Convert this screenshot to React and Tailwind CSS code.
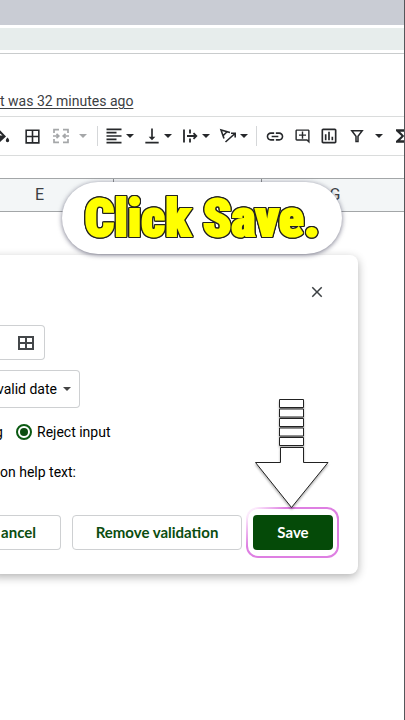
import React from 'react';
import {
  MdBorderAll,
  MdClose,
  MdFormatAlignLeft,
  MdFunctions,
  MdLink,
  MdOutlineAddComment,
  MdOutlineInsertChart,
  MdVerticalAlignBottom,
} from 'react-icons/md';

function ToolButton({ label, className = '', children }) {
  return (
    <button type="button" aria-label={label} className={`flex w-5 shrink-0 justify-center ${className}`}>
      {children}
    </button>
  );
}

function Caret({ label, className = '' }) {
  return (
    <button type="button" aria-label={label} className={`flex w-3 shrink-0 justify-center ${className}`}>
      <svg viewBox="0 0 8 4" className="h-1 w-2" fill="currentColor">
        <path d="M0 0h8L4 4z" />
      </svg>
    </button>
  );
}

function FillIcon() {
  return (
    <svg viewBox="0 0 20 20" className="size-5" fill="currentColor">
      <path d="M8 2l8 8.500-6.500 6L2 9.500l5-5L5.500 3l1-1L8 3.500zM8 5.800L4.500 9.500h8z" fillRule="evenodd" />
      <path d="M17.500 11.500s1.700 1.900 1.700 3a1.700 1.700 0 0 1-3.400 0c0-1.100 1.700-3 1.700-3z" />
    </svg>
  );
}

function MergeIcon() {
  return (
    <svg viewBox="0 0 20 20" className="size-5" fill="none" stroke="currentColor" strokeWidth="1.7">
      <path d="M3 7V3.700h5M12 3.700h5V7M3 13v3.300h5M12 16.300h5V13" />
      <path d="M2 10h5.500M5.500 7.800L7.800 10l-2.300 2.200M18 10h-5.500M14.500 7.800L12.200 10l2.300 2.200" />
    </svg>
  );
}

function WrapIcon() {
  return (
    <svg viewBox="0 0 20 20" className="size-5" fill="none" stroke="currentColor" strokeWidth="1.8">
      <path d="M4 3.500v13M10 3.500v4M10 12.500v4M7 10h9M13.500 7.200l2.800 2.800-2.800 2.800" />
    </svg>
  );
}

function RotateIcon() {
  return (
    <svg viewBox="0 0 20 20" className="size-5" fill="none" stroke="currentColor" strokeWidth="1.6">
      <path d="M6 12.500L3 4l9 2.500M5 9.800L9 5.800" />
      <path d="M7.500 16L17 7.500M13 7.300h4.200v4.200" />
    </svg>
  );
}

function FilterIcon() {
  return (
    <svg viewBox="0 0 20 20" className="size-5" fill="none" stroke="currentColor" strokeWidth="1.5">
      <path d="M4.800 4.800h10.400L11 10.200v5.300H9v-5.300z" />
    </svg>
  );
}

function Toolbar() {
  return (
    <div className="flex h-10 items-center overflow-hidden border-y border-[#dadcdc] text-[#26282b]">
      <ToolButton label="Fill color" className="-ml-[10px]"><FillIcon /></ToolButton>
      <ToolButton label="Borders" className="ml-3"><MdBorderAll size={19} /></ToolButton>
      <ToolButton label="Merge cells" className="ml-[9px] text-[#a5a7a9]"><MergeIcon /></ToolButton>
      <Caret label="Merge type" className="ml-1.5 text-[#a5a7a9]" />
      <div className="ml-2 h-5 w-px shrink-0 bg-[#d5d7d9]" />
      <ToolButton label="Horizontal align" className="ml-1.5"><MdFormatAlignLeft size={20} /></ToolButton>
      <Caret label="Horizontal align options" />
      <ToolButton label="Vertical align" className="ml-1.5"><MdVerticalAlignBottom size={20} /></ToolButton>
      <Caret label="Vertical align options" />
      <ToolButton label="Text wrapping" className="ml-1.5"><WrapIcon /></ToolButton>
      <Caret label="Text wrapping options" />
      <ToolButton label="Text rotation" className="ml-1.5"><RotateIcon /></ToolButton>
      <Caret label="Text rotation options" />
      <div className="ml-1.5 h-5 w-px shrink-0 bg-[#d5d7d9]" />
      <ToolButton label="Insert link" className="ml-2"><MdLink size={21} /></ToolButton>
      <ToolButton label="Insert comment" className="ml-[7px]"><MdOutlineAddComment size={17} /></ToolButton>
      <ToolButton label="Insert chart" className="ml-[7px]"><MdOutlineInsertChart size={20} /></ToolButton>
      <ToolButton label="Create a filter" className="ml-2"><FilterIcon /></ToolButton>
      <Caret label="Filter views" className="ml-1.5" />
      <ToolButton label="Functions" className="ml-1.5"><MdFunctions size={20} /></ToolButton>
    </div>
  );
}

function ColumnHeaders() {
  return (
    <div className="flex h-[34px] overflow-hidden border-y border-[#a3a6a8] bg-[#f3f6f7] text-base text-[#3c4043]">
      <div className="-ml-[34px] flex w-[148px] shrink-0 items-center justify-center border-r border-[#8e9193]">E</div>
      <div className="w-[148px] shrink-0 border-r border-[#8e9193]" />
      <div className="flex w-[146px] shrink-0 items-center justify-center">G</div>
    </div>
  );
}

function Callout() {
  return (
    <div className="absolute top-[182px] left-[62px] flex h-[72px] w-[280px] items-center justify-center rounded-[36px] bg-white pt-0.5 shadow-[0_1px_5px_rgba(30,30,60,0.6)]">
      <p className="font-[Impact,'Roboto_Condensed','Liberation_Sans_Narrow',sans-serif] text-[52px] leading-none font-black whitespace-nowrap text-[#ffff00] [-webkit-text-stroke:2px_#ffff00] [filter:drop-shadow(1px_0_0_#222)_drop-shadow(-1px_0_0_#222)_drop-shadow(0_1px_0_#222)_drop-shadow(0_-1px_0_#222)]">
        Click Save.
      </p>
    </div>
  );
}

function DownArrow() {
  return (
    <svg viewBox="0 0 76 112" className="absolute top-[142px] right-[29px] h-28 w-[76px] drop-shadow-[0_2px_1px_rgba(0,0,0,0.3)]" fill="#fff" stroke="#222" strokeWidth="1">
      <path d="M26.500 2.500h24v8h-24zM26.500 12h24v8h-24zM26.500 21.500h24v8h-24zM26.500 31h24v8h-24zM26.500 40.500h24v8h-24z" />
      <path d="M27.500 50.500h23v15h24.500L38.500 110.500 2.500 65.500h25z" />
    </svg>
  );
}

function ValidationDialog() {
  return (
    <section role="dialog" aria-label="Data validation" className="relative mt-[43px] mr-[46px] -ml-2 rounded-r-lg bg-white pb-4 pl-2 text-sm text-black shadow-[0_3px_10px_rgba(0,0,0,0.3)]">
      <div className="flex justify-end pt-7 pr-8">
        <button type="button" aria-label="Close" className="text-[#3c4043]"><MdClose size={18} /></button>
      </div>

      <div className="mt-6 flex h-[35px] w-[45px] items-center rounded-r border border-l-0 border-[#ced0d2]">
        <input type="text" aria-label="Cell range" className="w-[17px] outline-none" />
        <button type="button" aria-label="Select data range" className="text-[#44474a]">
          <svg viewBox="0 0 18 16" className="h-4 w-[18px]" fill="none" stroke="currentColor" strokeWidth="2">
            <path d="M2 2h14v12H2zM9 2v12M2 8h14" />
          </svg>
        </button>
      </div>

      <div className="relative mt-2.5 -ml-[3px] h-[38px] w-[83px]">
        <select aria-label="Criteria" className="h-full w-full appearance-none rounded-r border border-l-0 border-[#ced0d2] bg-white">
          <option>valid date</option>
        </select>
        <svg viewBox="0 0 8 4" className="pointer-events-none absolute top-[17px] right-[9px] h-1 w-2" fill="#444">
          <path d="M0 0h8L4 4z" />
        </svg>
      </div>

      <div className="mt-3.5 flex h-5 items-center">
        <span className="-ml-[5px] w-2">g</span>
        <label className="ml-[13px] flex items-center gap-[5px]">
          <input type="radio" name="invalid" defaultChecked className="size-4 appearance-none rounded-full border-2 border-[#0b5a12] bg-[#0b4d0f] bg-clip-content p-0.5" />
          Reject input
        </label>
      </div>

      <p className="mt-5 h-5 leading-5">on help text:</p>

      <div className="mt-[25px] flex items-center font-[Lato,sans-serif] text-[15px] font-bold text-[#0b4d0f]">
        <button type="button" className="h-[35px] w-[61px] rounded-r border border-l-0 border-[#ced0d2] pr-6 text-right">ancel</button>
        <button type="button" className="ml-[11px] h-[35px] w-[170px] rounded border border-[#ced0d2]">Remove validation</button>
        <div className="ml-1 rounded-xl bg-[linear-gradient(135deg,#ffffff_0%,#fbe6fb_8%,#de7fe2_28%)] p-0.5">
          <div className="rounded-[10px] bg-white py-1.5 pr-1 pl-[5px]">
            <button type="button" className="block h-[35px] w-20 rounded bg-[#054a08] text-white">Save</button>
          </div>
        </div>
      </div>

      <DownArrow />
    </section>
  );
}

export default function App() {
  return (
    <div className="relative min-h-screen overflow-hidden border-r border-[#55565a] bg-white font-[Roboto,sans-serif]">
      <div className="h-[25px] bg-[#c9ccd4]" />
      <div className="mt-[3px] h-[22px] bg-[#e7edec]" />
      <div className="mt-[3px] flex h-[63px] items-end border-t border-[#c9cccd] pb-[5px]">
        <a href="#history" className="text-sm leading-5 text-[#3c4043] underline underline-offset-2">t was 32 minutes ago</a>
      </div>
      <Toolbar />
      <div className="h-[22px]" />
      <ColumnHeaders />
      <ValidationDialog />
      <Callout />
    </div>
  );
}
